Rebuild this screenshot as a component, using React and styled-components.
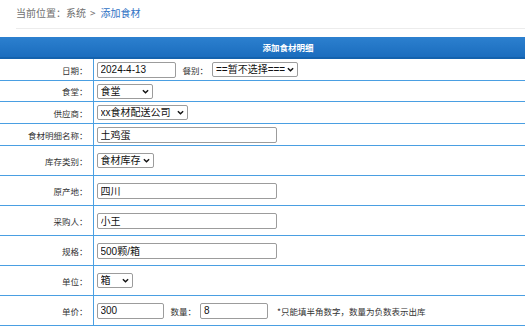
import React from 'react'
import styled, { createGlobalStyle } from 'styled-components'

const GlobalStyle = createGlobalStyle`
   html, body{
      margin: 0;
      padding: 0;
      background: #fff;
      overflow: hidden;
   }
   body{
      font-family: "Noto Sans CJK SC", "Liberation Sans", sans-serif;
      font-size: 8.5px;
      color: #333;
   }
`

const rows = [
   { label: '日期：', h: 22, fields: 'date' },
   { label: '食堂：', h: 21, fields: 'canteen' },
   { label: '供应商：', h: 22, fields: 'supplier' },
   { label: '食材明细名称：', h: 22, fields: 'name' },
   { label: '库存类别：', h: 30, fields: 'stock' },
   { label: '原产地：', h: 30, fields: 'origin' },
   { label: '采购人：', h: 30, fields: 'buyer' },
   { label: '规格：', h: 30, fields: 'spec' },
   { label: '单位：', h: 30, fields: 'unit' },
   { label: '单价：', h: 30, fields: 'price' },
]

const Dropdown = ({ w, children }) => (
   <SelectBox $w={w}>
      <Select>{children}</Select>
      <Chevron viewBox="0 0 8 5" aria-hidden="true">
         <path d="M1 1 L4 4 L7 1" />
      </Chevron>
   </SelectBox>
)

const renderFields = (key) => {
   switch (key) {
      case 'date':
         return (
            <>
               <TextInput $w={79} defaultValue="2024-4-13" />
               <InlineLabel>餐别：</InlineLabel>
               <Dropdown w={86}><option>==暂不选择===</option></Dropdown>
            </>
         )
      case 'canteen':
         return <Dropdown w={56}><option>食堂</option></Dropdown>
      case 'supplier':
         return <Dropdown w={91}><option>xx食材配送公司</option></Dropdown>
      case 'name':
         return <TextInput $w={180} defaultValue="土鸡蛋" />
      case 'stock':
         return <Dropdown w={57}><option>食材库存</option></Dropdown>
      case 'origin':
         return <TextInput $w={180} defaultValue="四川" />
      case 'buyer':
         return <TextInput $w={180} defaultValue="小王" />
      case 'spec':
         return <TextInput $w={180} defaultValue="500颗/箱" />
      case 'unit':
         return <Dropdown w={36}><option>箱</option></Dropdown>
      case 'price':
         return (
            <>
               <TextInput $w={67} defaultValue="300" />
               <InlineLabel>数量：</InlineLabel>
               <TextInput $w={68} defaultValue="8" />
               <Note>*只能填半角数字，数量为负数表示出库</Note>
            </>
         )
      default:
         return null
   }
}

const App = () => {
   return (
      <Page>
         <GlobalStyle />
         <Breadcrumb>
            当前位置：系统<Sep>&gt;</Sep><CurrentLink>添加食材</CurrentLink>
         </Breadcrumb>
         <FormTable>
            <colgroup>
               <col style={{ width: 93 }} />
               <col />
            </colgroup>
            <tbody>
               <tr>
                  <HeadCell colSpan={2}>添加食材明细</HeadCell>
               </tr>
               {rows.map((r) => (
                  <tr key={r.fields}>
                     <LabelCell $h={r.h}>{r.label}</LabelCell>
                     <FieldCell>
                        <FieldWrap>{renderFields(r.fields)}</FieldWrap>
                     </FieldCell>
                  </tr>
               ))}
            </tbody>
         </FormTable>
      </Page>
   )
}

const Page = styled.div`
   width: 576px;
`

const Breadcrumb = styled.div`
   margin-left: 16px;
   height: 28px;
   line-height: 25px;
   border-bottom: 1px solid #ececec;
   font-size: 10px;
   color: #6f6f6f;
   margin-bottom: 8px;
`

const Sep = styled.span`
   margin: 0 5px 0 4px;
`

const CurrentLink = styled.span`
   color: #2f72c4;
`

const FormTable = styled.table`
   width: 576px;
   border-collapse: collapse;
   table-layout: fixed;
   font-size: 8.5px;
`

const HeadCell = styled.td`
   height: 20px;
   padding: 0;
   background: linear-gradient(#2c80cf, #1b6dbe);
   border-bottom: 2px solid #1462ad;
   color: #fff;
   font-weight: bold;
   text-align: center;
`

const LabelCell = styled.td`
   height: ${(p) => p.$h - 1}px;
   padding: 0 5px 0 0;
   text-align: right;
   border-bottom: 1px solid #4a9fe2;
   border-right: 1px solid #4a9fe2;
   color: #333;
   white-space: nowrap;
`

const FieldCell = styled.td`
   padding: 0 0 0 3px;
   border-bottom: 1px solid #4a9fe2;
`

const FieldWrap = styled.div`
   display: flex;
   align-items: center;
   white-space: nowrap;
`

const TextInput = styled.input`
   box-sizing: border-box;
   width: ${(p) => p.$w}px;
   height: 16px;
   padding: 0 3px;
   border: 1px solid #9c9c9c;
   border-radius: 2px;
   font-family: "Liberation Sans", "Noto Sans CJK SC", sans-serif;
   font-size: 10px;
   color: #111;
   outline: none;
`

const SelectBox = styled.span`
   position: relative;
   display: inline-flex;
   width: ${(p) => p.$w}px;
   height: 15px;
`

const Select = styled.select`
   appearance: none;
   box-sizing: border-box;
   width: 100%;
   height: 100%;
   margin: 0;
   padding: 0 12px 0 3px;
   border: 1px solid #9c9c9c;
   border-radius: 2px;
   background: #fff;
   font-family: "Liberation Sans", "Noto Sans CJK SC", sans-serif;
   font-size: 10px;
   line-height: 13px;
   color: #111;
   outline: none;
`

const Chevron = styled.svg`
   position: absolute;
   right: 4px;
   top: 5px;
   width: 7px;
   height: 5px;
   fill: none;
   stroke: #111;
   stroke-width: 1.6;
   pointer-events: none;
`

const InlineLabel = styled.span`
   margin: 0 4px 0 7px;
   color: #333;
`

const Note = styled.span`
   margin-left: 9px;
   color: #333;
`

export default App
